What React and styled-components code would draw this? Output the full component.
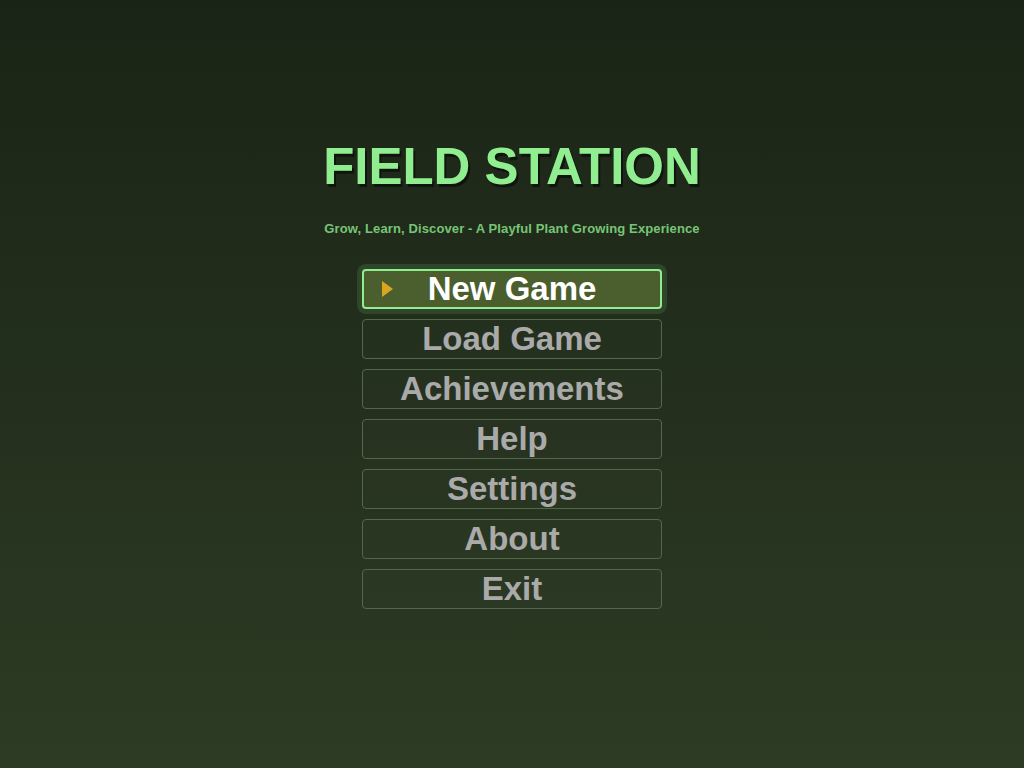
import { useState } from 'react'
import styled, { createGlobalStyle, css } from 'styled-components'

const GlobalStyle = createGlobalStyle`
  html, body {
    margin: 0;
    padding: 0;
    height: 100%;
  }
  body {
    font-family: 'Liberation Sans', Arial, sans-serif;
    background: linear-gradient(180deg, #1a2416 0%, #2d3b24 100%);
    min-height: 100vh;
  }
`

const Screen = styled.main`
  min-height: 100vh;
  box-sizing: border-box;
  padding-top: 137px;
  display: flex;
  flex-direction: column;
  align-items: center;
`

const Title = styled.h1`
  margin: 0;
  font-size: 51px;
  line-height: normal;
  font-weight: 700;
  color: #90ee90;
  text-shadow: 2px 3px 0 rgba(0, 0, 0, 0.5);
`

const Subtitle = styled.p`
  margin: 25px 0 0;
  font-size: 13px;
  letter-spacing: 0.12px;
  line-height: normal;
  font-weight: 700;
  color: rgba(144, 238, 144, 0.8);
`

const Menu = styled.nav`
  margin-top: 33px;
  display: flex;
  flex-direction: column;
  gap: 10px;
`

const MenuButton = styled.button`
  position: relative;
  box-sizing: border-box;
  width: 300px;
  height: 40px;
  padding: 0;
  border: 1px solid #52684a;
  border-radius: 4px;
  background: rgba(255, 255, 255, 0.01);
  color: #aaaaaa;
  font-family: 'Liberation Sans', Arial, sans-serif;
  font-size: 33px;
  font-weight: 700;
  line-height: 38px;
  text-align: center;
  cursor: pointer;

  ${({ $active }) =>
    $active &&
    css`
      border: 2px solid #90ee90;
      background: #4a5e2e;
      color: #ffffff;
      line-height: 36px;
      box-shadow: 0 0 0 5px #2f462b;
    `}
`

const Pointer = styled.span`
  position: absolute;
  left: 18px;
  top: 50%;
  transform: translateY(-50%);
  width: 0;
  height: 0;
  border-left: 11px solid #daa520;
  border-top: 8.5px solid transparent;
  border-bottom: 8.5px solid transparent;
`

const ITEMS = ['New Game', 'Load Game', 'Achievements', 'Help', 'Settings', 'About', 'Exit']

export default function App() {
  const [selected, setSelected] = useState(0)

  return (
    <>
      <GlobalStyle />
      <Screen>
        <Title>FIELD STATION</Title>
        <Subtitle>Grow, Learn, Discover - A Playful Plant Growing Experience</Subtitle>
        <Menu>
          {ITEMS.map((label, i) => (
            <MenuButton
              key={label}
              $active={i === selected}
              onMouseEnter={() => setSelected(i)}
            >
              {i === selected && <Pointer />}
              {label}
            </MenuButton>
          ))}
        </Menu>
      </Screen>
    </>
  )
}
